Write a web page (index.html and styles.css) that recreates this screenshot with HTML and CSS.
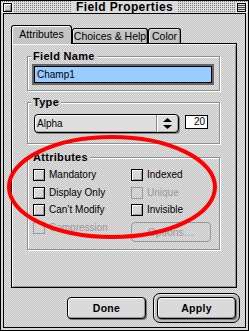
FILE: index.html
```html
<!DOCTYPE html>
<html lang="en">
<head>
  <meta charset="UTF-8">
  <title>Field Properties</title>
  <link rel="stylesheet" href="styles.css">
</head>
<body>
  <div class="window">
    <div class="titlebar">
      <span class="close-box"></span>
      <span class="title">Field Properties</span>
      <span class="collapse-box"></span>
    </div>

    <div class="content pattern">
      <div class="tabs">
        <div class="tab active pattern">Attributes</div>
        <div class="tab tab-choices">Choices &amp; Help</div>
        <div class="tab tab-color">Color</div>
      </div>

      <div class="pane">
        <div class="group group-name">
          <div class="group-title pattern">Field Name</div>
          <div class="focus-ring">
            <div class="text-field">Champ1</div>
          </div>
        </div>

        <div class="group group-type">
          <div class="group-title pattern">Type</div>
          <div class="type-row">
            <div class="popup">
              <span class="popup-text">Alpha</span>
              <span class="popup-arrows">
                <svg width="9" height="11" viewBox="0 0 9 11">
                  <path d="M4.5 0 L9 4 L0 4 Z M0 7 L9 7 L4.5 11 Z" fill="#000"/>
                </svg>
              </span>
            </div>
            <div class="length-field">20</div>
          </div>
        </div>

        <div class="group group-attrs">
          <div class="group-title pattern">Attributes</div>
          <div class="attr-grid">
            <label class="check"><span class="box"></span>Mandatory</label>
            <label class="check"><span class="box"></span>Indexed</label>
            <label class="check"><span class="box"></span>Display Only</label>
            <label class="check disabled"><span class="box"></span>Unique</label>
            <label class="check"><span class="box"></span>Can’t Modify</label>
            <label class="check"><span class="box"></span>Invisible</label>
            <label class="check disabled"><span class="box"></span>Compression</label>
            <div class="options-button">Options…</div>
          </div>
        </div>
      </div>

      <div class="buttons">
        <div class="button">Done</div>
        <div class="default-ring">
          <div class="button">Apply</div>
        </div>
      </div>
    </div>

    <svg class="mark" width="249" height="331" viewBox="0 0 249 331">
      <ellipse cx="112" cy="187" rx="103" ry="50" fill="none" stroke="#ff0000" stroke-width="4"/>
    </svg>
  </div>
</body>
</html>
```

FILE: styles.css
```css
body {
  margin: 0;
  font-family: "Liberation Sans", Arial, sans-serif;
  font-size: 10px;
  color: #000;
}

.pattern {
  background: repeating-conic-gradient(#c2c2c2 0 25%, #e2e2e2 0 50%) 0 0 / 2px 2px fixed;
}

.window {
  position: relative;
  width: 249px;
  height: 331px;
  box-sizing: border-box;
  border: 1px solid #000;
  background: #d6d6d6;
  display: flex;
  flex-direction: column;
  overflow: hidden;
}

.titlebar {
  height: 12px;
  display: flex;
  align-items: center;
  justify-content: space-between;
  padding: 0 2px 0 2px;
  background: conic-gradient(#7a7a7a 0 25%, #dcdcdc 0) 0 0 / 2px 2px;
}

.close-box {
  width: 9px;
  height: 9px;
  box-sizing: border-box;
  border: 1px solid #000;
  background: #ccc;
  box-shadow: inset 1px 1px #fff, inset -1px -1px #888;
  outline: 1px solid #eee;
  margin-top: 1px;
}

.collapse-box {
  width: 9px;
  height: 9px;
  box-sizing: border-box;
  border: 1px solid #000;
  background: repeating-linear-gradient(#ddd 0 1px, #444 1px 2px);
  outline: 1px solid #eee;
  margin-top: 1px;
}

.title {
  background: #dcdcdc;
  padding: 0 5px;
  font-size: 12px;
  font-weight: bold;
  letter-spacing: 0.4px;
  line-height: 12px;
}

.content {
  flex: 1;
  margin: 0 2px 2px 2px;
  border: 1px solid #000;
  padding: 11px 0 0 7px;
  display: flex;
  flex-direction: column;
}

.tabs {
  display: flex;
  align-items: flex-end;
  height: 18px;
  position: relative;
  z-index: 1;
}

.tab {
  height: 15px;
  box-sizing: border-box;
  border: 1px solid #000;
  border-bottom: none;
  border-radius: 3px 3px 0 0;
  background: #c4c4c4;
  box-shadow: inset 1px 1px #e8e8e8, inset -1px 0 #8a8a8a;
  text-align: center;
  line-height: 14px;
  font-size: 10.5px;
}

.tab.active {
  width: 61px;
  height: 19px;
  margin-bottom: -1px;
  line-height: 17px;
  box-shadow: inset 1px 1px #fff;
}

.tab-choices {
  width: 76px;
}

.tab-color {
  width: 33px;
}

.pane {
  width: 226px;
  height: 245px;
  box-sizing: border-box;
  border: 1px solid #000;
  box-shadow: inset 1px 1px #f4f4f4, inset -1px -1px #999;
  padding: 12px 16px 0 15px;
}

.group {
  box-sizing: border-box;
  border: 1px solid #8e8e8e;
  box-shadow: 1px 1px #fff, inset 1px 1px #fff;
}

.group-title {
  width: fit-content;
  height: 12px;
  margin: -7px 0 0 3px;
  padding: 0 2px;
  font-size: 11px;
  font-weight: bold;
  letter-spacing: 0.3px;
  line-height: 12px;
}

.group-name {
  height: 35px;
}

.focus-ring {
  width: 182px;
  height: 21px;
  box-sizing: border-box;
  margin: 2px 0 0 4px;
  border: 2px solid #666;
}

.text-field {
  height: 17px;
  box-sizing: border-box;
  border: 1px solid #000;
  background: #99ccff;
  padding-left: 2px;
  line-height: 15px;
}

.group-type {
  height: 42px;
  margin-top: 11px;
}

.type-row {
  display: flex;
  align-items: flex-start;
  gap: 6px;
  margin: 6px 0 0 6px;
}

.popup {
  width: 145px;
  height: 19px;
  box-sizing: border-box;
  border: 1px solid #000;
  border-radius: 4px;
  background: #dedede;
  box-shadow: inset 1px 1px #fff, inset -1px -1px #aaa, 1px 1px #888;
  display: flex;
}

.popup-text {
  flex: 1;
  padding-left: 2px;
  line-height: 17px;
}

.popup-arrows {
  width: 21px;
  border-left: 1px solid #8a8a8a;
  box-shadow: inset 1px 0 #fff;
  display: flex;
  align-items: center;
  justify-content: center;
}

.length-field {
  width: 23px;
  height: 14px;
  box-sizing: border-box;
  margin-top: 1px;
  border: 1px solid #000;
  background: #fff;
  text-align: right;
  padding-right: 2px;
  line-height: 12px;
}

.group-attrs {
  height: 93px;
  margin-top: 13px;
}

.attr-grid {
  display: grid;
  grid-template-columns: 98px 80px;
  grid-template-rows: 18px 17px 18px 20px;
  margin: 6px 0 0 5px;
}

.check {
  display: flex;
  align-items: flex-start;
  gap: 4px;
  line-height: 12px;
}

.box {
  width: 12px;
  height: 12px;
  box-sizing: border-box;
  border: 1px solid #000;
  background: #d8d8d8;
  box-shadow: inset 1px 1px #fff, inset -1px -1px #999;
}

.check.disabled {
  color: #9a9a9a;
}

.check.disabled .box {
  border-color: #9a9a9a;
  box-shadow: none;
  background: transparent;
}

.options-button {
  height: 20px;
  box-sizing: border-box;
  border: 1px solid #9a9a9a;
  border-radius: 4px;
  color: #9a9a9a;
  text-align: center;
  line-height: 18px;
  font-size: 10.5px;
}

.buttons {
  display: flex;
  align-items: center;
  gap: 7px;
  margin: 5px 0 0 56px;
}

.button {
  width: 79px;
  height: 22px;
  box-sizing: border-box;
  border: 1px solid #000;
  border-radius: 4px;
  background: #dadada;
  box-shadow: inset 1px 1px #fff, inset -1px -1px #999, 1px 1px #777;
  text-align: center;
  font-size: 10.5px;
  font-weight: bold;
  letter-spacing: 0.3px;
  line-height: 20px;
}

.default-ring {
  box-sizing: border-box;
  padding: 3px;
  border: 1px solid #000;
  border-radius: 7px;
  background: #bdbdbd;
  box-shadow: inset 1px 1px #eee;
}

.mark {
  position: absolute;
  top: -1px;
  left: -1px;
  pointer-events: none;
}
```
